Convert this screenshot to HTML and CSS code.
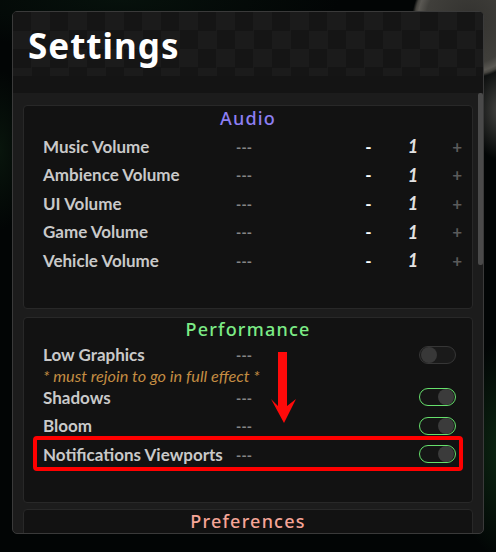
FILE: index.html
```html
<!DOCTYPE html>
<html>
<head>
<meta charset="utf-8">
<link rel="stylesheet" href="styles.css">
</head>
<body>
<div class="panel">
  <div class="header"><h1 class="title">Settings</h1></div>
  <div class="band"></div>
  <div class="scroll">
    <div class="content">
      <section class="sect audio">
        <h2 class="sect-title">Audio</h2>
        <div class="row vol"><span class="label">Music Volume</span><span class="dash">---</span><span class="minus">-</span><span class="num">1</span><span class="plus">+</span></div>
        <div class="row vol"><span class="label">Ambience Volume</span><span class="dash">---</span><span class="minus">-</span><span class="num">1</span><span class="plus">+</span></div>
        <div class="row vol"><span class="label">UI Volume</span><span class="dash">---</span><span class="minus">-</span><span class="num">1</span><span class="plus">+</span></div>
        <div class="row vol"><span class="label">Game Volume</span><span class="dash">---</span><span class="minus">-</span><span class="num">1</span><span class="plus">+</span></div>
        <div class="row vol"><span class="label">Vehicle Volume</span><span class="dash">---</span><span class="minus">-</span><span class="num">1</span><span class="plus">+</span></div>
      </section>
      <section class="sect perf">
        <h2 class="sect-title">Performance</h2>
        <div class="row tog"><span class="label">Low Graphics</span><span class="dash">---</span><span class="toggle"><span class="knob"></span></span></div>
        <div class="hint">* must rejoin to go in full effect *</div>
        <div class="row tog"><span class="label">Shadows</span><span class="dash">---</span><span class="toggle on"><span class="knob"></span></span></div>
        <div class="row tog"><span class="label">Bloom</span><span class="dash">---</span><span class="toggle on"><span class="knob"></span></span></div>
        <div class="row tog marked"><span class="label">Notifications Viewports</span><span class="dash">---</span><span class="toggle on"><span class="knob"></span></span></div>
        <svg class="arrow" width="26" height="72" viewBox="0 0 26 72"><polygon points="7,0 16,0 16,54 25,47 13,71 0,47 7,54" fill="#ff0a0a"/></svg>
      </section>
      <section class="sect pref">
        <h2 class="sect-title">Preferences</h2>
      </section>
    </div>
    <div class="track"><div class="thumb"></div></div>
  </div>
</div>
</body>
</html>
```
FILE: styles.css
```css
html, body {
  margin: 0;
  padding: 0;
}
body {
  width: 496px;
  height: 552px;
  overflow: hidden;
  background:
    radial-gradient(circle at 470px 20px, #33322f 0, #403f3b 44px, #5a5853 52px, #45443f 55px, rgba(20,20,18,0) 58px),
    radial-gradient(ellipse 30px 50px at 500px 110px, rgba(85,84,80,0.8), rgba(0,0,0,0) 100%),
    radial-gradient(ellipse 50px 110px at 505px 450px, rgba(20,65,28,0.6), rgba(0,0,0,0) 100%),
    radial-gradient(ellipse 30px 80px at 0px 150px, rgba(20,50,25,0.35), rgba(0,0,0,0) 100%),
    radial-gradient(ellipse 220px 50px at 120px 0px, rgba(15,40,25,0.35), rgba(0,0,0,0) 100%),
    #020505;
  font-family: "Lato", "Noto Sans", sans-serif;
  padding-top: 11px;
  padding-left: 12px;
  box-sizing: border-box;
}
.panel {
  width: 472px;
  height: 523px;
  box-sizing: border-box;
  border: 1px solid #3a3a3a;
  border-radius: 5px;
  background: #1c1c1c;
  overflow: hidden;
  display: flex;
  flex-direction: column;
}
.header {
  height: 64px;
  flex: none;
  background-color: #151515;
  background-image: conic-gradient(#1b1b1b 0 25%, #151515 0 50%, #1b1b1b 0 75%, #151515 0);
  background-size: 37px 37px;
  background-position: 0 0;
  display: flex;
  align-items: center;
  padding-left: 15px;
}
.title {
  margin: 0;
  color: #ffffff;
  font-family: "Noto Sans", sans-serif;
  font-weight: 700;
  font-size: 35px;
  letter-spacing: 1px;
  line-height: 1;
  padding-top: 2px;
}
.band {
  height: 17px;
  flex: none;
  background: #141414;
}
.scroll {
  flex: 1;
  display: flex;
  min-height: 0;
  overflow: hidden;
}
.content {
  flex: 1;
  min-width: 0;
  padding: 12px 5px 0 10px;
  display: flex;
  flex-direction: column;
  gap: 7px;
}
.track {
  width: 5px;
  flex: none;
}
.thumb {
  height: 172px;
  background: #4a4a4a;
  border-radius: 2px;
}
.sect {
  flex: none;
  position: relative;
  background: #121212;
  border: 1px solid #282828;
  border-radius: 4px;
  padding: 0 0 33px 0;
}
.audio { margin-bottom: 1px; }
.perf { margin-bottom: -1px; }
.sect-title {
  margin: 0;
  text-align: center;
  font-family: "Noto Sans", sans-serif;
  font-weight: 500;
  font-size: 18px;
  letter-spacing: 1.2px;
  line-height: 22px;
  height: 22px;
}
.audio .sect-title { color: #8d7ff2; margin: 1px 0 3px; }
.perf .sect-title { color: #7ceb86; margin-bottom: 1px; }
.pref .sect-title { color: #f5a597; }
.row {
  display: grid;
  align-items: center;
  color: #c9c9c9;
  font-weight: 700;
  padding-left: 19px;
}
.vol {
  height: 28.5px;
  grid-template-columns: 193px 117.5px 30px 59px 29.5px;
}
.tog {
  height: 28.5px;
  grid-template-columns: 193px 1fr 37px;
  padding-right: 16px;
}
.label {
  font-size: 17px;
  white-space: nowrap;
}
.dash {
  color: #858585;
  font-size: 14px;
  font-weight: 900;
  letter-spacing: 0.2px;
}
.minus {
  color: #ffffff;
  text-align: center;
  font-size: 17px;
}
.num {
  color: #e2e2e2;
  text-align: center;
  font-style: italic;
  font-size: 18px;
}
.plus {
  color: #5a5a5a;
  text-align: center;
  font-size: 17px;
}
.hint {
  color: #c48d42;
  font-style: italic;
  font-size: 16.3px;
  line-height: 14px;
  height: 14px;
  padding-left: 19px;
  white-space: nowrap;
}
.toggle {
  width: 37px;
  height: 18px;
  box-sizing: border-box;
  border: 1px solid #363636;
  border-radius: 9px;
  background: #1a1a1a;
  display: flex;
  align-items: center;
  padding: 0 1px;
}
.knob {
  width: 16px;
  height: 16px;
  border-radius: 50%;
  background: #383838;
}
.toggle.on {
  border-color: #66e06c;
  background: #151515;
  justify-content: flex-end;
}
.toggle.on .knob { background: #3b3b3b; }
.marked { position: relative; }
.marked::after {
  content: "";
  position: absolute;
  left: 9px;
  right: 9px;
  top: -4px;
  bottom: -2px;
  border: 4px solid #ff0000;
  border-radius: 4px;
}
.arrow {
  position: absolute;
  left: 247px;
  top: 34px;
}
.pref { height: 40px; }
```
